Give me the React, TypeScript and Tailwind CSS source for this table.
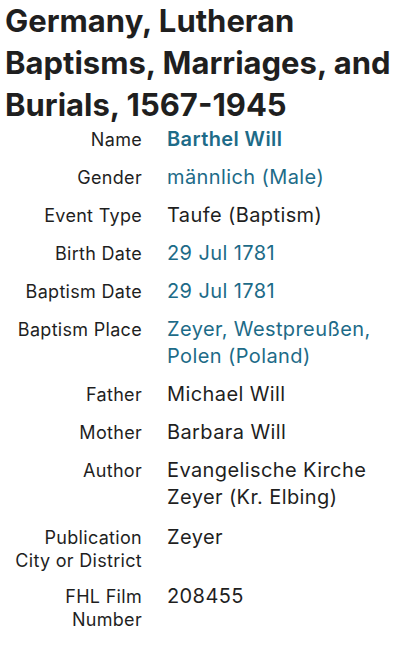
const ROWS: { label: string[]; value: string; link?: boolean; bold?: boolean }[] = [
  { label: ["Name"], value: "Barthel Will", link: true, bold: true },
  { label: ["Gender"], value: "männlich (Male)", link: true },
  { label: ["Event Type"], value: "Taufe (Baptism)" },
  { label: ["Birth Date"], value: "29 Jul 1781", link: true },
  { label: ["Baptism Date"], value: "29 Jul 1781", link: true },
  { label: ["Baptism Place"], value: "Zeyer, Westpreußen, Polen (Poland)", link: true },
  { label: ["Father"], value: "Michael Will" },
  { label: ["Mother"], value: "Barbara Will" },
  { label: ["Author"], value: "Evangelische Kirche Zeyer (Kr. Elbing)" },
  { label: ["Publication", "City or District"], value: "Zeyer" },
  { label: ["FHL Film", "Number"], value: "208455" },
];

export default function App() {
  return (
    <div className="min-h-screen bg-white px-[5px] font-['Inter',sans-serif] text-[#1f1f1f]">
      <h1 className="text-[31px] font-bold leading-[42px] tracking-[0px]">
        Germany, Lutheran Baptisms, Marriages, and Burials, 1567-1945
      </h1>
      <dl className="mt-0 grid grid-cols-[137px_1fr] items-baseline gap-x-[25px] gap-y-[11px]">
        {ROWS.map((row) => (
          <div key={row.label.join(" ")} className="contents">
            <dt className="text-right text-[18px] leading-[23px] tracking-[0.3px]">
              {row.label.map((l) => (
                <div key={l}>{l}</div>
              ))}
            </dt>
            <dd
              className={`text-[20px] leading-[27px] tracking-[0.4px] ${row.link ? "text-[#1d6b88]" : ""} ${
                row.bold ? "font-semibold" : ""
              } ${row.label[0] === "Author" ? "mb-[2px]" : ""}`}
            >
              {row.value}
            </dd>
          </div>
        ))}
      </dl>
    </div>
  );
}
